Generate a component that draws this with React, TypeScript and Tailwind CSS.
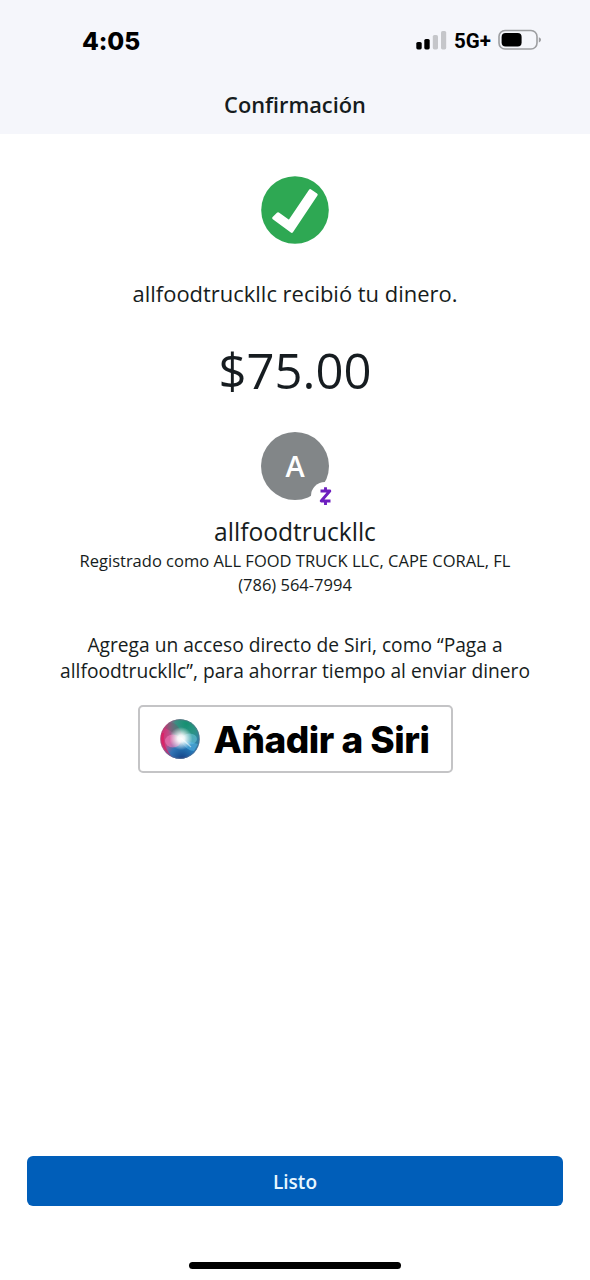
function StatusBar() {
  return (
    <div className="flex h-[80px] items-center justify-between pr-[48px] pl-[82px] text-black">
      <div className="pt-[1px] font-['Inter'] text-[24.500px] leading-[30px] font-extrabold tracking-[-0.1px]">4:05</div>
      <div className="flex items-center">
        <svg width="31" height="20" viewBox="0 0 31 20" fill="#000">
          <rect x="0.3" y="12" width="5.4" height="7.4" rx="1.6" />
          <rect x="8.3" y="9" width="5.4" height="10.4" rx="1.6" />
          <rect x="16.8" y="5" width="5.2" height="14.4" rx="1.6" fill="#c5c6ca" />
          <rect x="25" y="1" width="5.2" height="18.4" rx="1.6" fill="#c5c6ca" />
        </svg>
        <span className="ml-[7px] w-[37px] pt-[2px] font-['Roboto'] text-[20.500px] leading-[24px] font-bold whitespace-nowrap">5G+</span>
        <svg className="ml-[7px]" width="44" height="22" viewBox="0 0 44 22">
          <rect x="1" y="1.5" width="38" height="18.5" rx="6" fill="none" stroke="#9d9ea1" strokeWidth="1.6" />
          <rect x="3.6" y="4" width="20" height="13.5" rx="4" fill="#000" />
          <path d="M40.8 8.2c1.5.5 2.2 1.4 2.2 2.6s-.7 2.100-2.200 2.600z" fill="#9d9ea1" />
        </svg>
      </div>
    </div>
  );
}

function SuccessIcon() {
  return (
    <svg width="68" height="68" viewBox="0 0 68 68">
      <circle cx="34" cy="34" r="33.8" fill="#2ea853" />
      <path
        d="M12.700 42L17 37.700L28.200 45.800L49.300 14.700L55.200 18.700L30.700 55.300Z"
        fill="#fff"
        stroke="#fff"
        strokeWidth="3"
        strokeLinejoin="round"
      />
    </svg>
  );
}

function Avatar() {
  return (
    <div className="relative flex size-[68px] items-center justify-center rounded-full bg-[#828688] font-['Open_Sans'] text-[29px] font-semibold text-white">
      <span>A</span>
      <svg className="absolute top-[50px] left-[50px]" width="28" height="28" viewBox="0 0 28 28">
        <circle cx="14" cy="14" r="14" fill="#fff" />
        <path
          d="M9.500 9H18.800L10.200 19H19.500M14.500 5.200V9M14.500 19V23"
          fill="none"
          stroke="#6d1ebf"
          strokeWidth="2.900"
          strokeLinejoin="round"
        />
      </svg>
    </div>
  );
}

function SiriOrb() {
  return (
    <svg width="40" height="40" viewBox="0 0 40 40">
      <defs>
        <linearGradient id="base" x1="0" y1="0.35" x2="1" y2="0.6">
          <stop offset="0" stopColor="#d9266c" />
          <stop offset="0.3" stopColor="#b25b92" />
          <stop offset="0.6" stopColor="#348da6" />
          <stop offset="1" stopColor="#2f7da3" />
        </linearGradient>
        <radialGradient id="green" cx="0.66" cy="0.12" r="0.5">
          <stop offset="0" stopColor="#159070" />
          <stop offset="0.55" stopColor="#2a9580" stopOpacity="0.85" />
          <stop offset="1" stopColor="#2a9580" stopOpacity="0" />
        </radialGradient>
        <radialGradient id="blue" cx="0.55" cy="1" r="0.52">
          <stop offset="0" stopColor="#143e83" />
          <stop offset="0.6" stopColor="#2374b8" stopOpacity="0.85" />
          <stop offset="1" stopColor="#2374b8" stopOpacity="0" />
        </radialGradient>
        <radialGradient id="glow">
          <stop offset="0" stopColor="#fff" />
          <stop offset="0.3" stopColor="#fff" stopOpacity="0.9" />
          <stop offset="1" stopColor="#fff" stopOpacity="0" />
        </radialGradient>
        <clipPath id="orb">
          <circle cx="20" cy="20" r="19.700" />
        </clipPath>
      </defs>
      <g clipPath="url(#orb)">
        <rect width="40" height="40" fill="url(#base)" />
        <rect width="40" height="40" fill="url(#green)" />
        <rect width="40" height="40" fill="url(#blue)" />
        <path d="M9 4C15 2 21 9 22 18C15 15 9 11 5 9Z" fill="#6d5c6c" opacity="0.45" />
        <ellipse cx="13" cy="22" rx="8" ry="6.500" fill="#f27ab9" opacity="0.6" />
        <ellipse cx="29.500" cy="20" rx="7.500" ry="5.500" fill="#68c5d6" opacity="0.6" />
        <path d="M20 20C24 29 30 32 34 32L38 25Z" fill="#58b9ed" opacity="0.5" />
        <path d="M1 14C0 24 4 32 12 38C6 31 3 24 4 14Z" fill="#e0195f" opacity="0.7" />
        <circle cx="21" cy="19.500" r="11.500" fill="url(#glow)" />
        <path d="M21 19L31 28" stroke="#fff" strokeWidth="1.200" opacity="0.5" />
      </g>
      <circle cx="20" cy="20" r="19.300" fill="none" stroke="#7b6683" strokeWidth="0.8" opacity="0.55" />
    </svg>
  );
}

export default function App() {
  return (
    <div className="flex h-[1280px] w-[590px] flex-col bg-white font-['Open_Sans',sans-serif] text-[#161c20]">
      <header className="h-[134px] shrink-0 bg-[#f5f6fb]">
        <StatusBar />
        <h1 className="text-center text-[21.800px] leading-[50px] font-semibold">Confirmación</h1>
      </header>

      <main className="flex flex-1 flex-col items-center pt-[42px] text-center">
        <SuccessIcon />
        <p className="mt-[35px] text-[21.950px] leading-[30px]">allfoodtruckllc recibió tu dinero.</p>
        <p className="mt-[31px] text-[49px] leading-[60px]">$75.00</p>
        <div className="mt-[32px]">
          <Avatar />
        </div>
        <h2 className="mt-[17px] text-[24.600px] leading-[30px]">allfoodtruckllc</h2>
        <p className="mt-[2px] text-[16.500px] leading-[24px] whitespace-nowrap">
          Registrado como ALL FOOD TRUCK LLC, CAPE CORAL, FL
          <br />
          (786) 564-7994
        </p>
        <p className="mt-[35px] text-[19.200px] leading-[26px] whitespace-nowrap">
          Agrega un acceso directo de Siri, como “Paga a
          <br />
          allfoodtruckllc”, para ahorrar tiempo al enviar dinero
        </p>
        <button className="mt-[21px] flex h-[68px] w-[315px] items-center rounded-[5px] border-2 border-[#c4c4c6] pl-[20px] text-black">
          <SiriOrb />
          <span className="ml-[14px] pt-[1px] font-['Inter'] text-[37px] leading-[44px] font-extrabold tracking-[-0.500px] whitespace-nowrap">Añadir a Siri</span>
        </button>
      </main>

      <footer className="flex h-[124px] shrink-0 flex-col items-center">
        <button className="h-[50px] w-[536px] rounded-[6px] bg-[#005eb9] pt-[2px] text-[19px] font-semibold text-[#e8f7ff]">Listo</button>
        <div className="mt-[56px] h-[7px] w-[212px] rounded-full bg-black" />
      </footer>
    </div>
  );
}
